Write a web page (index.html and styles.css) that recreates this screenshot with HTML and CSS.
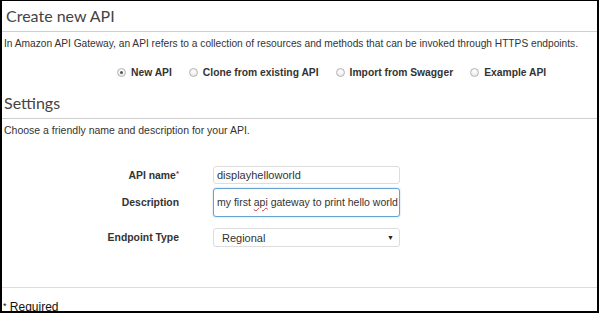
FILE: index.html
```html
<!DOCTYPE html>
<html lang="en">
<head>
    <meta charset="UTF-8">
    <title>Create new API</title>
    <link rel="stylesheet" href="styles.css">
</head>
<body>
    <div class="frame">
        <h1 class="page-title">Create new API</h1>
        <p class="intro">In Amazon API Gateway, an API refers to a collection of resources and methods that can be invoked through HTTPS endpoints.</p>

        <div class="radio-row">
            <label class="radio-item"><span class="radio checked"></span>New API</label>
            <label class="radio-item"><span class="radio"></span>Clone from existing API</label>
            <label class="radio-item"><span class="radio"></span>Import from Swagger</label>
            <label class="radio-item"><span class="radio"></span>Example API</label>
        </div>

        <h2 class="section-title">Settings</h2>
        <p class="intro sub">Choose a friendly name and description for your API.</p>

        <div class="form">
            <div class="form-row row-name">
                <label class="form-label">API name<sup class="req">*</sup></label>
                <div class="field">displayhelloworld</div>
            </div>
            <div class="form-row row-desc">
                <label class="form-label">Description</label>
                <div class="field focused">my first <span class="typo">api</span> gateway to print hello world</div>
            </div>
            <div class="form-row row-type">
                <label class="form-label">Endpoint Type</label>
                <div class="field select">
                    <span>Regional</span>
                    <span class="caret">&#9660;</span>
                </div>
            </div>
        </div>

        <footer class="footer"><span class="req-note">*</span> Required</footer>
    </div>
</body>
</html>
```

FILE: styles.css
```css
/* Global styles */
:root {
    --text-color: #333333;
    --heading-color: #444444;
    --rule-color: #cfcfcf;
    --field-border: #dddddd;
    --focus-border: #66a3d2;
}

body {
    margin: 0;
    padding: 0;
    background: #ffffff;
    font-family: "Liberation Sans", Arial, sans-serif;
    color: var(--text-color);
}

.frame {
    box-sizing: border-box;
    width: 599px;
    height: 313px;
    border: 2px solid #000000;
    border-top-width: 1px;
    overflow: hidden;
    display: flex;
    flex-direction: column;
}

/* Headings */
.page-title,
.section-title {
    margin: 0;
    padding: 0 4px;
    font-family: Lato, "Open Sans", sans-serif;
    font-weight: 400;
    font-size: 16px;
    color: var(--heading-color);
    border-bottom: 1px solid var(--rule-color);
}

.page-title {
    height: 30px;
    line-height: 30px;
    padding-left: 4px;
}

.section-title {
    height: 30px;
    line-height: 30px;
    padding-left: 2px;
}

/* Intro text */
.intro {
    margin: 0;
    padding: 0 2px;
    height: 24px;
    line-height: 24px;
    font-size: 10.2px;
    white-space: nowrap;
}

.intro.sub {
    height: 22px;
    line-height: 22px;
    font-size: 10.5px;
}

/* Radio options */
.radio-row {
    display: flex;
    align-items: center;
    height: 32px;
    padding-left: 115px;
    font-size: 10.3px;
    font-weight: bold;
}

.radio-item {
    display: flex;
    align-items: center;
    margin-right: 17px;
}

.radio {
    box-sizing: border-box;
    width: 9px;
    height: 9px;
    margin-right: 5px;
    border: 1px solid #b4b4b4;
    border-radius: 50%;
    background: radial-gradient(circle at 50% 35%, #ffffff, #e2e2e2);
    position: relative;
}

.radio.checked::after {
    content: "";
    position: absolute;
    left: 2px;
    top: 2px;
    width: 3px;
    height: 3px;
    border-radius: 50%;
    background: #555555;
}

/* Form */
.form {
    flex: 1;
    padding-top: 25px;
    border-bottom: 1px solid #dcdcdc;
    font-size: 10.4px;
}

.form-row {
    display: grid;
    grid-template-columns: 177px 187px;
    column-gap: 34px;
    align-items: center;
}

.form-label {
    text-align: right;
    font-weight: bold;
    color: #333333;
}

.req {
    font-size: 8px;
    color: #8a3a3a;
    vertical-align: 3px;
    line-height: 0;
}

.field {
    box-sizing: border-box;
    display: flex;
    align-items: center;
    padding: 0 3px;
    border: 1px solid var(--field-border);
    border-radius: 3px;
    background: #ffffff;
    font-size: 11px;
    color: #333333;
    white-space: nowrap;
    overflow: hidden;
}

.row-name .field {
    height: 18px;
}

.row-desc {
    margin-top: 4px;
}

.row-desc .field {
    display: block;
    height: 29px;
    line-height: 26px;
    padding-left: 3px;
    padding-right: 0;
    font-size: 10.5px;
    border-color: var(--focus-border);
    box-shadow: 0 0 2px rgba(102, 163, 210, 0.5);
}

.typo {
    text-decoration: underline wavy #d23a3a;
    text-decoration-thickness: 1px;
    text-underline-offset: 1px;
}

.row-type {
    margin-top: 11px;
}

.select {
    height: 19px;
    justify-content: space-between;
    padding-left: 8px;
    padding-right: 5px;
}

.caret {
    font-size: 7px;
    color: #222222;
}

/* Footer */
.footer {
    height: 23px;
    padding: 11px 0 0 1px;
    box-sizing: border-box;
    font-size: 12px;
    line-height: 14px;
    color: #111111;
}

.req-note {
    font-size: 9px;
    vertical-align: 2px;
}
```
